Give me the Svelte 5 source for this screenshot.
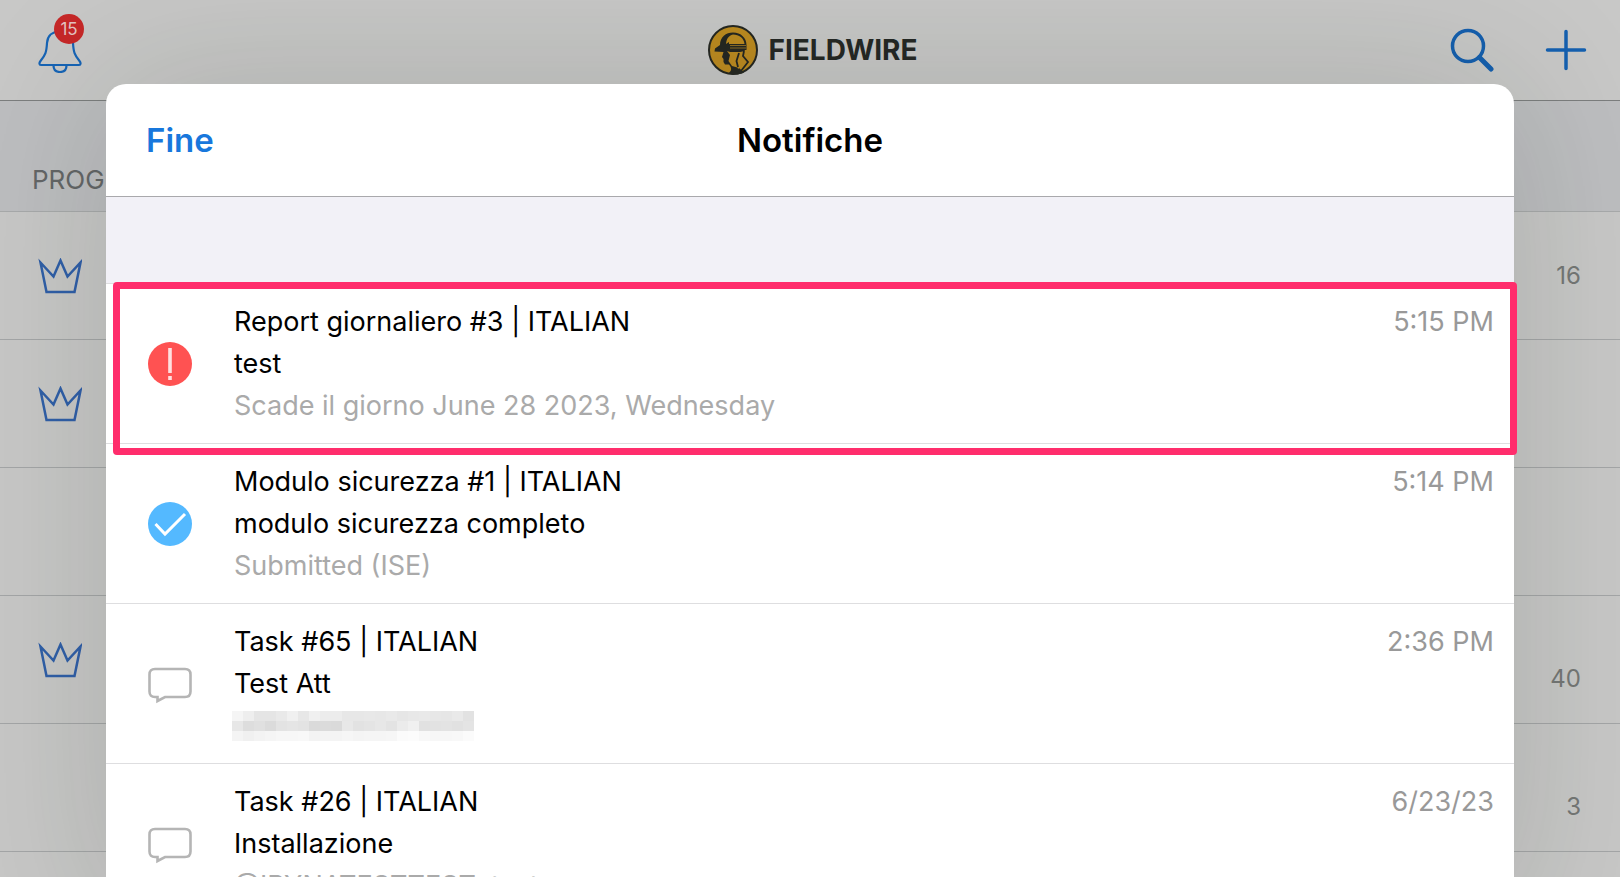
<script lang="ts">
	type Icon = 'alert' | 'check' | 'chat';

	interface Notification {
		icon: Icon;
		title: string;
		body: string;
		detail?: string;
		time: string;
		highlighted?: boolean;
	}

	const projects: { crown: boolean; count?: number; low?: boolean }[] = [
		{ crown: true, count: 16 },
		{ crown: true },
		{ crown: false },
		{ crown: true, count: 40, low: true },
		{ crown: false, count: 3, low: true },
		{ crown: false }
	];

	const notifications: Notification[] = [
		{
			icon: 'alert',
			title: 'Report giornaliero #3 | ITALIAN',
			body: 'test',
			detail: 'Scade il giorno June 28 2023, Wednesday',
			time: '5:15 PM',
			highlighted: true
		},
		{
			icon: 'check',
			title: 'Modulo sicurezza #1 | ITALIAN',
			body: 'modulo sicurezza completo',
			detail: 'Submitted (ISE)',
			time: '5:14 PM'
		},
		{
			icon: 'chat',
			title: 'Task #65 | ITALIAN',
			body: 'Test Att',
			time: '2:36 PM'
		},
		{
			icon: 'chat',
			title: 'Task #26 | ITALIAN',
			body: 'Installazione',
			detail: '@IRYNATESTTEST  test',
			time: '6/23/23'
		}
	];

	// grey levels of the redacted line, one array per row of blocks
	const mosaic = [
		[245, 238, 229, 229, 233, 240, 231, 240, 236, 236, 231, 231, 232, 231, 233, 230, 232, 233, 231, 230, 233, 226],
		[231, 221, 224, 219, 227, 229, 227, 218, 219, 218, 232, 226, 228, 231, 227, 235, 240, 225, 226, 227, 225, 228],
		[244, 240, 243, 245, 247, 247, 248, 243, 244, 244, 246, 244, 245, 245, 246, 251, 252, 248, 247, 247, 248, 251]
	];
</script>

<div class="page">
	<header class="topbar">
		<button class="icon-btn bell" aria-label="Notifiche, 15">
			<svg width="44" height="46" viewBox="0 0 44 46" fill="none" stroke="#1764b5" stroke-width="2.200" stroke-linejoin="round">
				<path d="M22 4.500C14 4.500 9.500 9 9 16C8.500 25 7.500 28 2.500 34C1 36 1 38 3 38H41C43 38 43 36 41.500 34C36.500 28 35.500 25 35 16C34.500 9 30 4.500 22 4.500Z" />
				<path d="M15.500 38.500C15.500 42.500 18 45 22 45S28.500 42.500 28.500 38.500" />
			</svg>
			<span class="badge">15</span>
		</button>

		<div class="brand">
			<svg width="50" height="50" viewBox="0 0 50 50">
				<circle cx="25" cy="25" r="24" fill="#bd8b20" stroke="#252722" stroke-width="2" />
				<path
					d="M6.500 26.500L7 23.500L12 20C12 12 18 7.500 25 7.500C33 7.500 38.500 13 38.500 20V25H37L36 27H22L19 26L22 30L20.500 36L24 41L31 43L36 47.500C31 50 25 50 20 48.500C24 46 24 43 21 39.500L17 39.500L15.500 37V34L14 32L15.500 27L6.500 26.500Z"
					fill="#252722"
				/>
				<path d="M18 19C18.500 14 20.500 10.500 25 9.500C31 9.500 36 13 36.500 19H21V17Z" fill="#bd8b20" />
				<path d="M22 20.500H38M22 23H38" stroke="#8d6c24" stroke-width="1" />
				<path d="M22 27L25 32L26 27H31L28 31L28.500 36L25 40L21.500 36L23 32Z" fill="#bd8b20" />
				<path d="M37 26L36 31L39.500 36L35 40L30 44L29 40L31 35L30 31L32 27Z" fill="#bd8b20" />
				<path d="M36 26L35 31L40 37L33 46M31 28L28.500 36L30 42" fill="none" stroke="#252722" stroke-width="1.800" />
			</svg>
			<span class="brand-name">FIELDWIRE</span>
		</div>

		<div class="actions">
			<button class="icon-btn" aria-label="Cerca">
				<svg width="44" height="44" viewBox="0 0 44 44" fill="none" stroke="#155fae">
					<circle cx="18" cy="18" r="15.500" stroke-width="3.500" />
					<path d="M29.500 29.500L41 41" stroke-width="5" stroke-linecap="round" />
				</svg>
			</button>
			<button class="icon-btn" aria-label="Aggiungi">
				<svg width="42" height="42" viewBox="0 0 42 42" fill="none" stroke="#1560b0" stroke-width="3.500" stroke-linecap="round">
					<path d="M21 2.500V39.500M2.500 21H39.500" />
				</svg>
			</button>
		</div>
	</header>

	<main>
		<h2 class="section-title">PROG</h2>
		<ul class="projects">
			{#each projects as project}
				<li class="project">
					{#if project.crown}
						<svg width="44" height="36" viewBox="0 0 44 36" fill="none" stroke="#305fa8" stroke-width="2.500">
							<path d="M2.500 4.500L8.500 34H36.500L42.500 4.500L29.500 18.500L22.500 2.500L15.500 18.500Z" />
						</svg>
					{/if}
					{#if project.count}
						<span class="count" class:low={project.low}>{project.count}</span>
					{/if}
				</li>
			{/each}
		</ul>
	</main>

	<section class="sheet" role="dialog" aria-labelledby="sheet-title">
		<div class="sheet-header">
			<button class="done">Fine</button>
			<h1 id="sheet-title">Notifiche</h1>
		</div>
		<ul class="notifications">
			{#each notifications as item}
				<li class="notification" class:highlighted={item.highlighted}>
					<svg class="status" width="44" height="44" viewBox="0 0 44 44" fill="none">
						{#if item.icon === 'alert'}
							<circle cx="22" cy="22" r="22" fill="#ff5252" />
							<path d="M22 6V31M22 34V38" stroke="#ffe0e0" stroke-width="3.600" />
						{:else if item.icon === 'check'}
							<circle cx="22" cy="22" r="22" fill="#54b9ff" />
							<path d="M7.500 22L17 32L37 12" stroke="#fff" stroke-width="3" />
						{:else}
							<path
								d="M7 7H37Q42.500 7 42.500 12.500V29.500Q42.500 35 37 35H17L9.500 39V35H7Q1.500 35 1.500 29.500V12.500Q1.500 7 7 7Z"
								stroke="#b5b5b5"
								stroke-width="2.600"
							/>
						{/if}
					</svg>
					<div class="text">
						<p>{item.title}</p>
						<p>{item.body}</p>
						{#if item.detail}
							<p class="detail">{item.detail}</p>
						{:else}
							<svg class="mosaic" width="242" height="30" viewBox="0 0 242 30" shape-rendering="crispEdges">
								{#each mosaic as row, y}
									{#each row as level, x}
										<rect x={x * 11} y={y * 10} width="11" height="10" fill="rgb({level},{level},{level})" />
									{/each}
								{/each}
							</svg>
						{/if}
					</div>
					<time>{item.time}</time>
				</li>
			{/each}
		</ul>
	</section>
</div>

<style>
	:global(body) {
		margin: 0;
	}

	.page {
		position: relative;
		height: 100vh;
		overflow: hidden;
		background: #c8c8c7;
		font-family: Inter, 'Liberation Sans', sans-serif;
	}

	button {
		padding: 0;
		border: none;
		background: none;
		font: inherit;
		cursor: pointer;
	}

	svg {
		display: block;
		flex: none;
	}

	h1,
	h2,
	p,
	ul {
		margin: 0;
		padding: 0;
	}

	ul {
		list-style: none;
	}

	.topbar {
		display: grid;
		grid-template-columns: 1fr auto 1fr;
		align-items: center;
		height: 100px;
		padding: 0 33px 0 38px;
		border-bottom: 1px solid #7c7e7e;
	}

	.icon-btn {
		position: relative;
	}

	.bell {
		justify-self: start;
	}

	.badge {
		position: absolute;
		top: -13px;
		right: -2px;
		width: 30px;
		height: 30px;
		border-radius: 50%;
		background: #c62828;
		color: #e4c4c2;
		font-size: 17px;
		line-height: 30px;
		text-align: center;
	}

	.brand {
		display: flex;
		align-items: center;
		gap: 11px;
	}

	.brand-name {
		color: #252825;
		font-size: 28px;
		font-weight: 700;
	}

	.actions {
		display: flex;
		align-items: center;
		justify-content: flex-end;
		gap: 51px;
	}

	.section-title {
		height: 111px;
		box-sizing: border-box;
		padding: 64px 32px 0;
		border-bottom: 1px solid #a8aaab;
		background: #bdbec0;
		color: #646667;
		font-size: 26px;
		font-weight: 400;
		line-height: 30px;
	}

	.project {
		display: flex;
		align-items: center;
		height: 127px;
		padding: 0 39px 0 38px;
		border-bottom: 1px solid #a4a6a7;
	}

	.count {
		margin-left: auto;
		color: #757776;
		font-size: 24px;
	}

	.low {
		padding-top: 38px;
	}

	.sheet {
		position: absolute;
		top: 84px;
		right: 106px;
		left: 106px;
		border-radius: 20px 20px 0 0;
		background: #fff;
		box-shadow: 0 0 160px rgba(20, 30, 20, 0.16);
	}

	.sheet-header {
		display: grid;
		grid-template-columns: 1fr auto 1fr;
		align-items: center;
		height: 112px;
		padding: 0 40px;
		border-bottom: 1px solid #a9a9ac;
		font-size: 33px;
		font-weight: 600;
	}

	.done {
		justify-self: start;
		color: #1877dc;
	}

	h1 {
		font-size: 33px;
		font-weight: 600;
	}

	.notifications {
		padding-top: 86px;
		background: linear-gradient(#f2f1f7, #f2f1f7) top / 100% 86px no-repeat;
	}

	.notification {
		position: relative;
		display: flex;
		align-items: center;
		height: 159px;
		padding: 0 20px 0 42px;
		border-top: 1px solid #dedee0;
		font-size: 27px;
		line-height: 42px;
	}

	.highlighted::after {
		content: '';
		position: absolute;
		z-index: 1;
		top: -2px;
		right: -3px;
		bottom: -12px;
		left: 7px;
		border: 7px solid #ff2d6c;
		border-radius: 4px;
	}

	.text {
		flex: 1;
		margin-left: 42px;
	}

	.detail {
		color: #aaa;
		white-space: pre;
	}

	.mosaic {
		margin: 6px 0 6px -2px;
	}

	time {
		align-self: flex-start;
		padding-top: 17px;
		color: #999;
	}
</style>
